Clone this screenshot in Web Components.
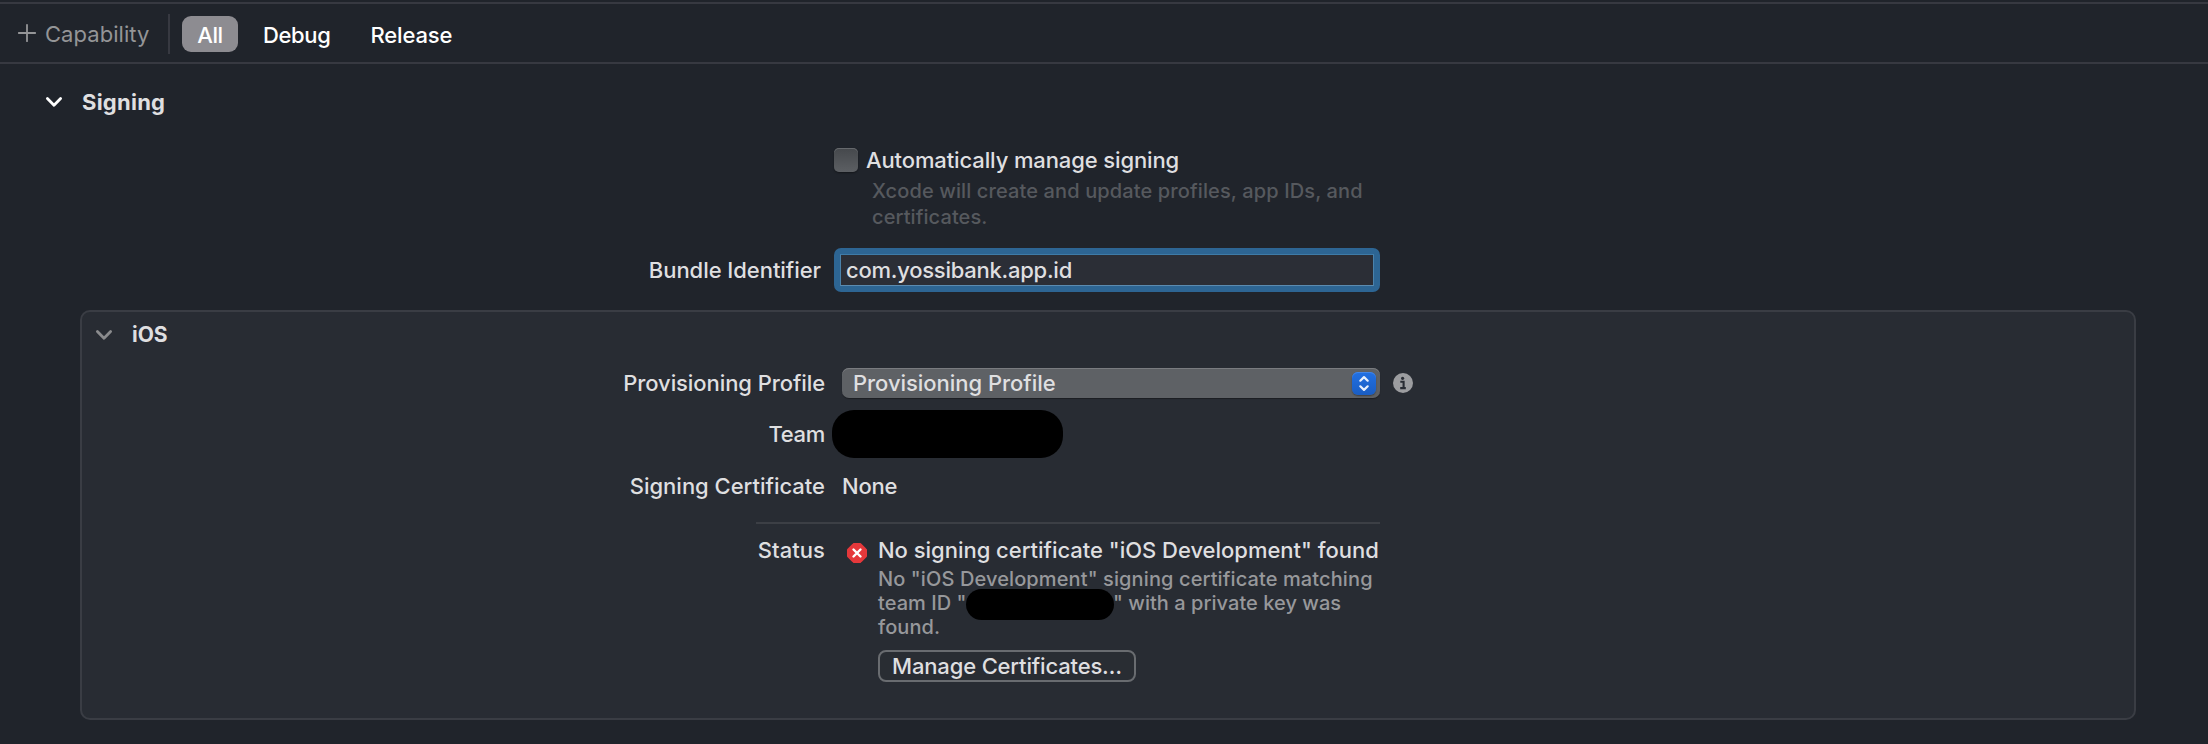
<!DOCTYPE html>
<html lang="en">
<head>
<meta charset="utf-8">
<title>Signing &amp; Capabilities</title>
<style>
  html, body { margin: 0; height: 100%; overflow: hidden; }
  body { background: #20242b; color: #dfdfe0; font-family: Inter, "Liberation Sans", sans-serif; }
</style>
</head>
<body>
<signing-editor></signing-editor>
<script>
function define(name, markup) {
  const template = document.createElement('template');
  template.innerHTML = markup;
  customElements.define(name, class extends HTMLElement {
    constructor() {
      super();
      this.attachShadow({ mode: 'open' }).appendChild(template.content.cloneNode(true));
    }
  });
}

/* A run of text; --ls sets its tracking */
define('ui-text', `
<style>
  :host { display: block; white-space: nowrap; font-size: var(--fs, 22px); line-height: var(--lh, 26px);
          font-weight: var(--fw, 450); letter-spacing: var(--ls, 0); color: var(--ink, inherit); }
</style><slot></slot>`);

define('disclosure-chevron', `
<style>:host { display: block; width: 20px; height: 14px; } svg { display: block; }</style>
<svg width="20" height="14" viewBox="0 0 20 14" fill="none" stroke="currentColor" stroke-width="2.8" stroke-linecap="round" stroke-linejoin="round"><path d="M3.4 3.6 10 10.3l6.6-6.7"/></svg>`);

define('scope-tab', `
<style>
  :host { display: flex; align-items: center; justify-content: center; box-sizing: border-box; height: 36px; padding: 2px 15px 0 14px; border-radius: 9px; color: #fff; }
  :host([selected]) { background: #8d8c91; width: 56px; padding: 2px 0 0; }
</style><slot></slot>`);

define('filter-bar', `
<style>
  :host { display: flex; align-items: center; box-sizing: border-box; height: 64px; border-bottom: 2px solid #373941; padding: 4px 0 0 17px;
          background: linear-gradient(#373941, #373941) 0 2px / 100% 2px no-repeat; }
  .add { display: flex; align-items: center; gap: 8px; color: #949597; width: 151px; }
  .rule { width: 2px; height: 40px; background: #373941; margin: 2px 12px 0 0; }
  .tabs { display: flex; gap: 11px; margin-top: 2px; }
</style>
<div class="add">
  <svg width="20" height="20" viewBox="0 0 20 20" stroke="currentColor" stroke-width="1.8" stroke-linecap="round"><path d="M10 1.8v16.4M1.8 10h16.4"/></svg>
  <slot name="add"></slot>
</div>
<div class="rule"></div>
<div class="tabs"><slot></slot></div>`);

define('section-header', `
<style>
  :host { display: flex; align-items: center; box-sizing: border-box; color: #dfdfe0; }
  disclosure-chevron { color: var(--chevron, #fff); margin-right: var(--gap, 18px); }
</style>
<disclosure-chevron></disclosure-chevron><slot></slot>`);

/* Label column ends at a shared edge; the field column follows it */
define('form-row', `
<style>
  :host { display: grid; grid-template-columns: var(--label, 825px) 1fr; align-items: var(--align, center); }
  .label { display: flex; justify-content: flex-end; }
  .field { display: flex; align-items: var(--align, center); padding-left: var(--indent, 17px); }
</style>
<div class="label"><slot name="label"></slot></div>
<div class="field"><slot></slot></div>`);

define('check-box', `
<style>
  :host { display: flex; align-items: center; gap: 8px; }
  i { width: 24px; height: 24px; border-radius: 5px; background: linear-gradient(#45484c, #5c5f63); box-shadow: inset 0 1px 0 #66696d, 0 1px 2px #0006; }
</style><i></i><slot></slot>`);

define('text-input', `
<style>
  :host { display: flex; align-items: center; box-sizing: border-box; width: 546px; height: 44px; border-radius: 7px; background: #2d6593; padding: 6px; }
  div { flex: 1; height: 30px; border: 1px solid; border-color: #3e7ba8 #4a82ab #5b8bb0 #4a82ab; background: #2b2e36; display: flex; align-items: center; padding-left: 5px; }
</style><div><slot></slot></div>`);

define('popup-button', `
<style>
  :host { display: flex; align-items: center; justify-content: space-between; box-sizing: border-box; width: 538px; height: 30px; border-radius: 7px;
          background: #5e6165; box-shadow: inset 0 1px 0 #7a7c80, 0 1px 1px #0005; padding: 0 4px 0 11px; }
  .knob { width: 24px; height: 23px; border-radius: 6px; background: linear-gradient(#2270e2, #1a5dc2); box-shadow: inset 0 1px 0 #4285e6, 0 1px 1.5px #0005; }
  svg { display: block; }
</style>
<slot></slot>
<div class="knob"><svg width="24" height="23" viewBox="0 0 24 23" fill="none" stroke="#e9f0fc" stroke-width="2.2" stroke-linecap="round" stroke-linejoin="round"><path d="M8.3 8.7 12 5.1l3.7 3.6M8.3 14.3l3.7 3.6 3.7-3.6"/></svg></div>`);

define('info-icon', `
<style>:host { display: block; } svg { display: block; }</style>
<svg width="20" height="20" viewBox="0 0 20 20"><circle cx="10" cy="10" r="10" fill="#9c9da0"/><circle cx="9.6" cy="5.3" r="1.6" fill="#282c33"/><path d="M7.3 8.8h3.3v6.4M7.2 15.1h5.6" fill="none" stroke="#282c33" stroke-width="2.1"/></svg>`);

define('error-icon', `
<style>:host { display: block; } svg { display: block; }</style>
<svg width="20" height="20" viewBox="0 0 20 20"><path d="M6.3.5h7.4l5.8 5.8v7.4l-5.8 5.8H6.3L.5 13.7V6.3z" fill="#e5383b" stroke="#e5383b" stroke-width="1" stroke-linejoin="round"/><path d="m6.5 6.5 7 7m0-7-7 7" stroke="#fff" stroke-width="2.4" stroke-linecap="round"/></svg>`);

define('redaction-bar', `
<style>:host { display: block; background: #000; width: var(--w); height: var(--h); border-radius: var(--r); }</style>`);

define('push-button', `
<style>
  :host { display: flex; align-items: center; justify-content: center; box-sizing: border-box; width: 258px; height: 32px; border: 2px solid #696c70; border-radius: 8px; background: #292d33; }
</style><slot></slot>`);

define('status-message', `
<style>
  :host { display: flex; align-items: flex-start; gap: 11px; }
  error-icon { margin-top: 6px; }
  .detail { position: relative; margin-top: 4px; color: #97989b; --fs: 20px; --lh: 24px; }
  .id { display: flex; }
  .hidden { width: 147px; flex: none; }
  redaction-bar { position: absolute; left: 88px; top: 22px; --w: 148px; --h: 31px; --r: 15.5px; }
  push-button { margin-top: 11px; }
</style>
<error-icon></error-icon>
<div>
  <ui-text style="--ls:-.02px">No signing certificate "iOS Development" found</ui-text>
  <div class="detail">
    <ui-text style="--ls:.11px">No "iOS Development" signing certificate matching</ui-text>
    <div class="id">
      <ui-text style="--ls:.05px;width:88px">team ID "</ui-text><span class="hidden"></span><ui-text style="--ls:.04px">" with a private key was</ui-text>
    </div>
    <ui-text style="--ls:.1px">found.</ui-text>
    <redaction-bar></redaction-bar>
  </div>
  <push-button><ui-text style="--ls:-.16px">Manage Certificates…</ui-text></push-button>
</div>`);

define('platform-panel', `
<style>
  :host { display: block; box-sizing: border-box; height: 410px; margin: 18px 72px 0 80px; border: 2px solid #3a3d44; border-radius: 10px; background: #282c33; }
</style><slot></slot>`);

define('signing-editor', `
<style>
  :host { display: block; }
  .hint { padding-left: 872px; color: #56595e; --fs: 20px; --lh: 26px; }
  .rule { height: 2px; width: 624px; margin: 8px 0 13px 674px; background: #3c3f45; }
  platform-panel { --label: 743px; --indent: 17px; }
</style>
<filter-bar>
  <ui-text slot="add" style="--ls:.05px;--fw:400;padding-top:1px">Capability</ui-text>
  <scope-tab selected><ui-text style="--fw:500;--ls:-.4px">All</ui-text></scope-tab>
  <scope-tab><ui-text style="--fw:500;--ls:-.35px">Debug</ui-text></scope-tab>
  <scope-tab><ui-text style="--fw:500;--ls:-.15px">Release</ui-text></scope-tab>
</filter-bar>

<section-header style="height:76px;padding-left:44px"><ui-text style="--fw:700;--ls:.25px">Signing</ui-text></section-header>

<form-row style="height:38px;padding-top:2px;box-sizing:border-box;--label:834px;--indent:0px">
  <check-box><ui-text style="--ls:-.12px">Automatically manage signing</ui-text></check-box>
</form-row>
<div class="hint">
  <ui-text style="--ls:.12px">Xcode will create and update profiles, app IDs, and</ui-text>
  <ui-text style="--ls:.1px">certificates.</ui-text>
</div>
<form-row style="margin-top:18px;--label:821px;--indent:13px">
  <ui-text slot="label" style="--ls:-.05px">Bundle Identifier</ui-text>
  <text-input><ui-text style="--ls:-.25px">com.yossibank.app.id</ui-text></text-input>
</form-row>

<platform-panel>
  <section-header style="height:44px;padding:2px 0 0 12px;--chevron:#8a8b8d;--gap:18px"><ui-text style="--fs:21px;--fw:700">iOS</ui-text></section-header>
  <form-row style="height:54px">
    <ui-text slot="label" style="--ls:-.08px">Provisioning Profile</ui-text>
    <popup-button><ui-text style="--ls:-.04px">Provisioning Profile</ui-text></popup-button>
    <info-icon style="margin-left:13px"></info-icon>
  </form-row>
  <form-row style="height:48px;--indent:7px">
    <ui-text slot="label" style="--ls:-.3px">Team</ui-text>
    <redaction-bar style="--w:231px;--h:48px;--r:22px"></redaction-bar>
  </form-row>
  <form-row style="height:56px">
    <ui-text slot="label" style="--ls:-.01px">Signing Certificate</ui-text>
    <ui-text style="--ls:-.25px">None</ui-text>
  </form-row>
  <div class="rule"></div>
  <form-row style="--align:start;--indent:22px">
    <ui-text slot="label" style="--ls:.05px">Status</ui-text>
    <status-message></status-message>
  </form-row>
</platform-panel>`);
</script>
</body>
</html>
